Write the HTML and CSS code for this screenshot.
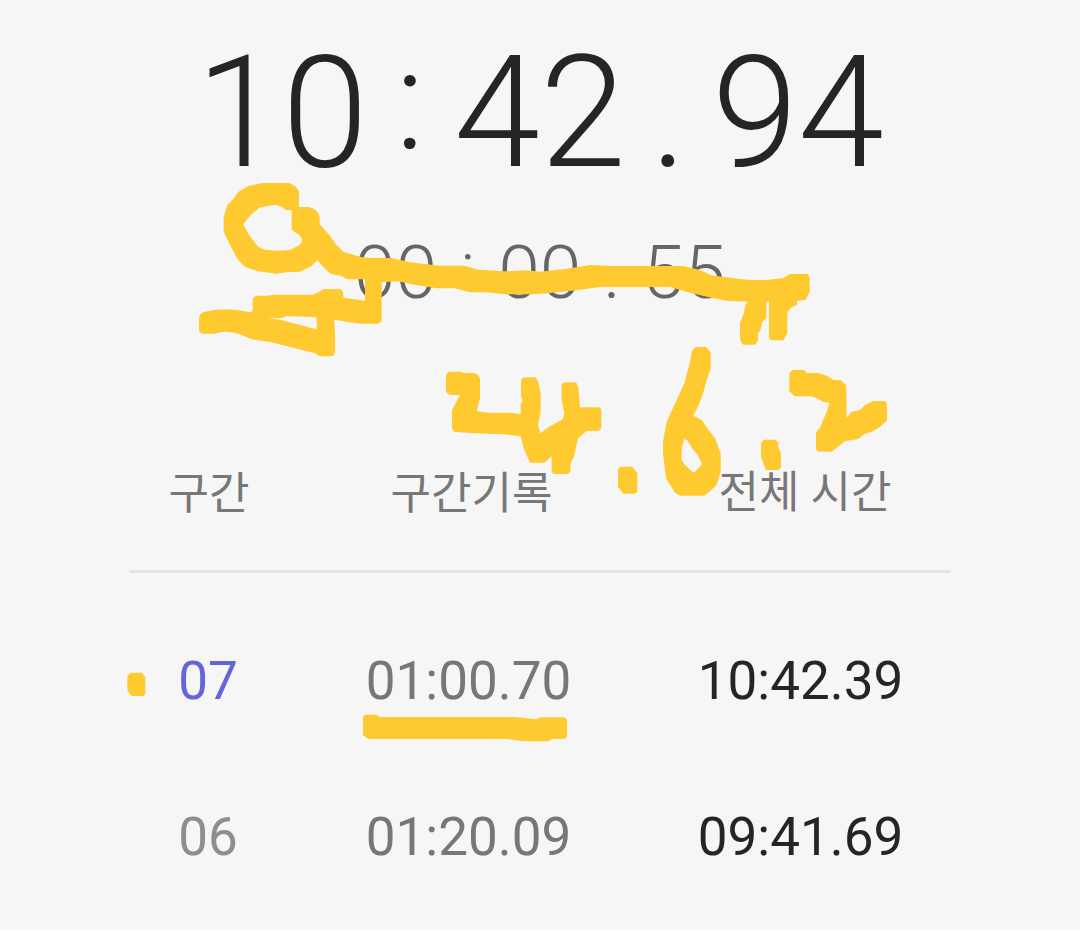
FILE: index.html
```html
<!DOCTYPE html>
<html lang="ko">
<head>
  <meta charset="UTF-8">
  <meta name="viewport" content="width=device-width, initial-scale=1.0">
  <title>스톱워치</title>
  <link rel="stylesheet" href="styles.css">
</head>
<body>
  <div class="stopwatch">
    <div class="timer total">
      <span>10</span><span class="colon">:</span><span>42</span><span class="dot">.</span><span>94</span>
    </div>
    <div class="timer current">
      <span>00</span><span class="colon">:</span><span>00</span><span class="dot">.</span><span>55</span>
    </div>

    <div class="laps">
      <div class="row head">
        <span>구간</span>
        <span>구간기록</span>
        <span class="all">전체 시간</span>
      </div>
      <div class="row latest">
        <span class="num">07</span>
        <span class="lap">01:00.70</span>
        <span class="time">10:42.39</span>
      </div>
      <div class="row">
        <span class="num">06</span>
        <span class="lap">01:20.09</span>
        <span class="time">09:41.69</span>
      </div>
    </div>
  </div>

  <!-- pen marks over the page -->
  <svg class="marks" viewBox="0 0 3240 2790">
    <g transform="translate(570 90)">
      <path fill-rule="evenodd" d="M220 459H298L315 468L327 483V531H355Q388 538 389 565V583L420 617L437 642L461 666L510 680L540 684H605L660 697L750 707H823L865 719L945 724L1010 721L1050 725L1125 717L1200 705L1260 708H1480L1530 720L1564 736L1625 744L1680 750H1730L1780 744L1800 732H1850Q1859 735 1859 745V785L1847 809L1822 813L1820 825L1802 833L1792 850V910L1780 931H1745Q1737 928 1737 920V815H1729V865L1716 877L1712 900L1704 910V932L1696 944H1660Q1653 940 1650 925V880L1662 848L1665 828L1673 815L1610 812L1570 805L1500 788L1440 771H1230L1165 780L1080 789L1030 793L945 793L888 787L838 787L795 775H740L665 763L625 754L575 757V868Q574 880 562 881H510L432 869L435 910V965Q433 980 420 979H388L375 970L240 936L185 928L145 911Q105 900 75 911H38Q27 908 27 900V865Q28 848 45 845Q110 830 180 847L188 843V808Q190 798 202 797H235L250 794H370L402 777H450Q462 780 460 803L525 812V748H471L455 738L423 732L400 712L382 690L365 708L330 725L290 727L260 731L205 724L165 711L142 687L120 645L104 613L101 600V560L112 525L130 507L145 486L175 468ZM258 524L232 528L207 534L180 557L160 582L177 615L204 650L225 659L262 662L300 660L325 647Q337 640 336 627L327 614L305 600V540H288L274 530ZM231 865L270 869L380 898V862L290 858L275 865Z"/>
    </g>
    <g transform="translate(1290 990)">
      <path d="M60 125H93L100 129H130Q148 132 150 148V205L140 244L175 248H240L272 252V220L279 212L273 200V155Q274 143 285 142H315L325 155L332 190V245L324 285L331 310L355 292L398 268L403 250L395 210V165Q397 157 408 157H438L445 170L450 232H505Q514 234 514 240V290Q513 302 500 303H470L444 325L432 380L421 402V420Q421 432 410 432H373Q365 430 365 420V379L343 398H300L291 378L281 355L272 319L220 313L130 310L73 305L66 295V240L90 195H60Q48 190 48 180V140Q48 126 60 125Z"/>
      <path d="M572 410H607L622 430V482Q620 491 610 491H580L564 470V420Q564 412 572 410Z"/>
    </g>
    <g transform="translate(1950 990)">
      <path fill-rule="evenodd" d="M137 51H168L182 67V115L170 150L160 187L146 225L130 257L155 270L172 295L195 325L212 370V425L200 465L184 480L163 497H90L74 487L48 445L39 370V335L50 275L80 210L103 160L120 95L126 62ZM103 327L96 350L94 388L105 405L128 426H135L156 402L143 374L130 360L111 330Z"/>
      <path d="M427 120H462L470 129H505L530 137L551 150H572L589 166L590 263L605 246L630 239L645 226L668 213H700Q711 214 711 223V272L688 292L664 306L643 312L625 327L586 333L545 365H510Q498 364 498 354V307L510 293L530 245L538 219L518 215L500 205L484 199H434L418 184V130Z"/>
      <path d="M342 329H375L384 335L386 355L393 370V410Q390 420 380 420H347L340 400L333 380V340Z"/>
    </g>
    <g transform="translate(330 1890)">
      <path d="M63 128H96L106 142V190Q105 198 96 198H65L52 182V138Z"/>
      <path d="M765 254H800L808 261H1215L1277 268L1292 262H1360Q1371 264 1371 272V318Q1370 327 1360 327H1327L1315 334H1240L1190 327H775L759 315V262Z"/>
    </g>
  </svg>
</body>
</html>
```

FILE: styles.css
```css
html, body {
  margin: 0;
  padding: 0;
  height: 100%;
  font-family: Roboto, 'Noto Sans CJK KR', sans-serif;
  background-color: #f6f6f6;
  overflow: hidden;
}
.stopwatch {
  width: 1080px;
  height: 930px;
  display: flex;
  flex-direction: column;
}
.timer {
  display: flex;
  font-weight: 300;
}
.colon, .dot {
  text-align: center;
}
.total {
  height: 183px;
  padding: 22px 0 0 196px;
  font-size: 155px;
  line-height: 183px;
  color: #252525;
}
.total .colon {
  width: 86px;
  margin-top: -13px;
  margin-left: -1px;
  margin-right: 1px;
  font-size: 140px;
}
.total .dot {
  width: 86px;
}
.current {
  height: 88px;
  padding: 23px 0 0 354px;
  font-size: 75px;
  line-height: 88px;
  color: #666;
}
.current .colon {
  width: 61px;
  margin-top: -6px;
  font-size: 67px;
}
.current .dot {
  width: 61px;
}
.laps {
  width: 822px;
  margin: 135px 0 0 129px;
}
.row {
  display: grid;
  grid-template-columns: 158px 363px 301px;
  height: 156px;
  line-height: 156px;
  font-size: 53px;
  text-align: center;
  color: #777;
}
.head {
  grid-template-columns: 160px 365px 302px;
  height: 119px;
  line-height: 87px;
  font-size: 44px;
  border-bottom: 3px solid #e5e5e5;
  margin-bottom: 30px;
}
.all {
  margin-top: -1px;
}
.num {
  color: #8e8e8e;
}
.latest .num {
  color: #6266d9;
}
.time {
  color: #252525;
}
.marks {
  position: absolute;
  top: 0;
  left: 0;
  width: 1080px;
  height: 930px;
  fill: #ffca30;
}
```
